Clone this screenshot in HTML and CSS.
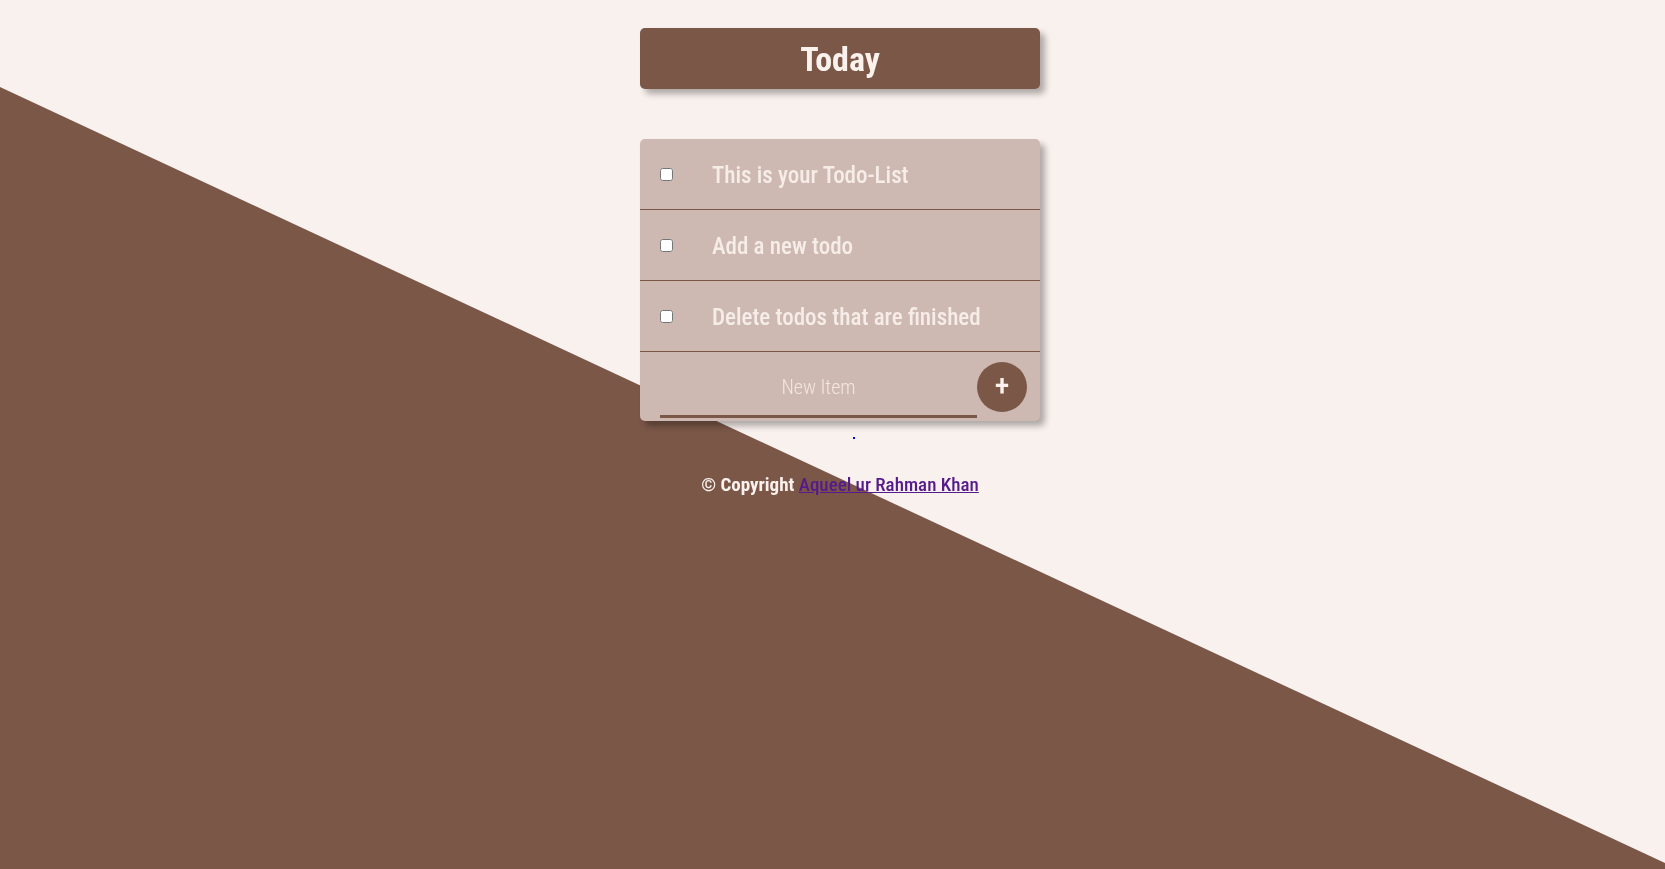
FILE: index.html
```html
<!DOCTYPE html>
<html lang="en">
<head>
<meta charset="utf-8">
<title>To-Do List</title>
<link rel="stylesheet" href="styles.css">
</head>
<body>
<div class="page">
  <div class="heading"><h1>Today</h1></div>

  <div class="box">
    <div class="item">
      <input type="checkbox">
      <p>This is your Todo-List</p>
    </div>
    <div class="item">
      <input type="checkbox">
      <p>Add a new todo</p>
    </div>
    <div class="item">
      <input type="checkbox">
      <p>Delete todos that are finished</p>
    </div>
    <form class="item-form">
      <input class="new-item" type="text" name="newItem" placeholder="New Item" autocomplete="off" autofocus>
      <button class="add" type="button" name="list">+</button>
    </form>
  </div>

  <div class="dot-row"><span class="dot"></span></div>

  <footer class="footer">
    <p>© Copyright <a href="#">Aqueel ur Rahman Khan</a></p>
  </footer>
</div>
</body>
</html>
```
FILE: styles.css
```css
html, body {
  margin: 0;
  padding: 0;
  height: 100%;
}

body {
  background-color: #f9f1ee;
  font-family: "Roboto Condensed", "Roboto", sans-serif;
  overflow: hidden;
}

body::before {
  content: "";
  position: fixed;
  inset: 0;
  background-color: #7b5748;
  clip-path: polygon(0 87px, 100% 863px, 100% 100%, 0 100%);
  z-index: 0;
}

.page {
  position: relative;
  z-index: 1;
  display: flex;
  flex-direction: column;
  align-items: center;
  padding-left: 15px;
}

.heading {
  width: 400px;
  height: 61px;
  margin-top: 28px;
  background-color: #7b5748;
  border-radius: 5px;
  box-shadow: 5px 5px 6px rgba(0, 0, 0, 0.3);
  text-align: center;
}

.heading h1 {
  margin: 0;
  padding-top: 2px;
  font-size: 34px;
  font-weight: 700;
  line-height: 59px;
  color: #fbf2ee;
}

.box {
  width: 400px;
  margin-top: 50px;
  background-color: #cdb9b2;
  border-radius: 5px;
  box-shadow: 5px 5px 6px rgba(0, 0, 0, 0.3);
}

.item {
  display: flex;
  align-items: center;
  height: 70px;
  border-bottom: 1px solid #7b5748;
  padding-left: 16px;
}

.item input[type="checkbox"] {
  width: 13px;
  height: 13px;
  margin: 3px 3px 3px 4px;
}

.item p {
  margin: 0 0 0 36px;
  padding-top: 2px;
  font-size: 23px;
  font-weight: 500;
  color: #f7ede8;
}

.item-form {
  display: flex;
  align-items: flex-start;
  height: 69px;
  box-sizing: border-box;
  padding: 10px 0 3px 20px;
  margin: 0;
}

.new-item {
  width: 317px;
  height: 56px;
  box-sizing: border-box;
  padding: 0 0 4px;
  border: none;
  border-bottom: 3px solid #7b5748;
  background: transparent;
  outline: none;
  text-align: center;
  font-family: "Roboto Condensed", "Roboto", sans-serif;
  font-size: 20px;
  font-weight: 300;
  color: #5a3f35;
  caret-color: #000;
}

.new-item::placeholder {
  color: #f3e6df;
  opacity: 1;
}

.add {
  width: 50px;
  height: 50px;
  padding: 0 0 5px;
  border: none;
  border-radius: 50%;
  background-color: #7b5748;
  color: #fbf2ee;
  font-family: "Roboto Condensed", "Roboto", sans-serif;
  font-size: 30px;
  font-weight: 500;
  line-height: 1;
  cursor: pointer;
}

.dot-row {
  display: flex;
  justify-content: center;
  margin-top: 16px;
  height: 2px;
}

.dot {
  display: block;
  width: 2px;
  height: 2px;
  margin-left: 28px;
  background-color: #0000ee;
}

.footer {
  margin-top: 34px;
  text-align: center;
}

.footer p {
  margin: 0;
  font-size: 19px;
  line-height: 24px;
  font-weight: 700;
  color: #fbf2ee;
}

.footer a {
  color: #551a8b;
  font-weight: 500;
}
```
